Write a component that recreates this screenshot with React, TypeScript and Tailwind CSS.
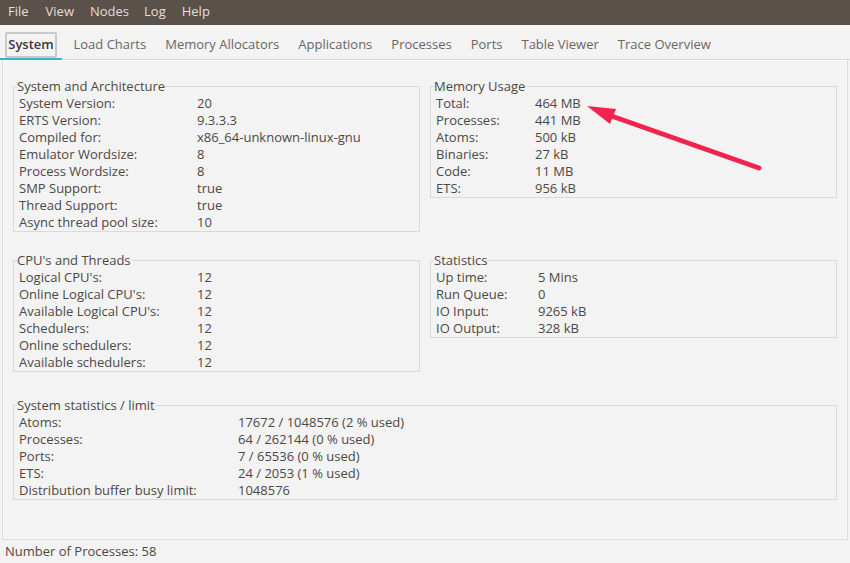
import React from "react";

type Row = [string, string];

const sysArch: Row[] = [
  ["System Version:", "20"],
  ["ERTS Version:", "9.3.3.3"],
  ["Compiled for:", "x86_64-unknown-linux-gnu"],
  ["Emulator Wordsize:", "8"],
  ["Process Wordsize:", "8"],
  ["SMP Support:", "true"],
  ["Thread Support:", "true"],
  ["Async thread pool size:", "10"],
];

const memory: Row[] = [
  ["Total:", "464 MB"],
  ["Processes:", "441 MB"],
  ["Atoms:", "500 kB"],
  ["Binaries:", "27 kB"],
  ["Code:", "11 MB"],
  ["ETS:", "956 kB"],
];

const cpus: Row[] = [
  ["Logical CPU's:", "12"],
  ["Online Logical CPU's:", "12"],
  ["Available Logical CPU's:", "12"],
  ["Schedulers:", "12"],
  ["Online schedulers:", "12"],
  ["Available schedulers:", "12"],
];

const stats: Row[] = [
  ["Up time:", "5 Mins"],
  ["Run Queue:", "0"],
  ["IO Input:", "9265 kB"],
  ["IO Output:", "328 kB"],
];

const limits: Row[] = [
  ["Atoms:", "17672 / 1048576 (2 % used)"],
  ["Processes:", "64 / 262144 (0 % used)"],
  ["Ports:", "7 / 65536 (0 % used)"],
  ["ETS:", "24 / 2053 (1 % used)"],
  ["Distribution buffer busy limit:", "1048576"],
];

const tabs = [
  "Load Charts",
  "Memory Allocators",
  "Applications",
  "Processes",
  "Ports",
  "Table Viewer",
  "Trace Overview",
];

function Group({ title, rows, labelW }: { title: string; rows: Row[]; labelW: string }) {
  return (
    <fieldset className="border border-[#dadada] pl-[5px] pr-2 min-w-0">
      <legend className="ml-[-2px] px-0 text-[13px] leading-[17px]">{title}</legend>
      <div className={`grid ${labelW}`}>
        {rows.map(([k, v]) => (
          <React.Fragment key={k}>
            <div className="text-[13px] leading-[17px] whitespace-nowrap">{k}</div>
            <div className="text-[13px] leading-[17px] whitespace-nowrap">{v}</div>
          </React.Fragment>
        ))}
      </div>
    </fieldset>
  );
}

export default function App() {
  return (
    <div
      className="relative w-[850px] h-[563px] overflow-hidden bg-[#f3f3f3] text-[#4d4845] flex flex-col"
      style={{ fontFamily: '"Open Sans", "Noto Sans", sans-serif' }}
    >
      {/* menu bar */}
      <div className="h-[25px] bg-[#5a514b] flex items-center pb-[1px] text-[13px] text-[#e3dfdb]">
        <span className="ml-[8px]">File</span>
        <span className="ml-[17px]">View</span>
        <span className="ml-[16px]">Nodes</span>
        <span className="ml-[15px]">Log</span>
        <span className="ml-[16px]">Help</span>
      </div>

      {/* tabs */}
      <div className="h-[35px] flex items-end border-b border-[#dadada]">
        <div className="w-[62px] h-full flex flex-col border-b-2 border-[#3ab3c8] mb-[-1px]">
          <div className="mt-[6px] ml-[5px] w-[52px] h-[27px] border-2 border-[#c9c9c9] rounded-[2px] flex items-center justify-center text-[13px] font-semibold text-[#3b3835]">
            System
          </div>
        </div>
        <div className="flex h-full items-center pt-[5px] pl-[2px] text-[13px] font-medium text-[#6b6662]">
          {tabs.map((t) => (
            <div key={t} className="px-[9.5px]">
              {t}
            </div>
          ))}
        </div>
      </div>

      {/* content panel */}
      <div className="mx-[2px] h-[480px] border border-t-0 border-[#dcdcdc] shadow-[inset_0_0_0_1px_#fafafa] px-[10px] pt-[18px]">
        <div className="grid grid-cols-2 gap-x-[10px] items-start">
          <Group title="System and Architecture" rows={sysArch} labelW="grid-cols-[178px_1fr]" />
          <Group title="Memory Usage" rows={memory} labelW="grid-cols-[99px_1fr]" />
        </div>
        <div className="grid grid-cols-2 gap-x-[10px] items-start mt-[20px]">
          <Group title="CPU's and Threads" rows={cpus} labelW="grid-cols-[178px_1fr]" />
          <Group title="Statistics" rows={stats} labelW="grid-cols-[102px_1fr]" />
        </div>
        <div className="mt-[25px]">
          <Group title="System statistics / limit" rows={limits} labelW="grid-cols-[219px_1fr]" />
        </div>
      </div>

      {/* status bar */}
      <div className="flex-1 flex items-center pl-[5px] text-[13px]">Number of Processes: 58</div>

      {/* annotation arrow */}
      <svg className="absolute inset-0 pointer-events-none" width="850" height="563">
        <line x1="759" y1="168" x2="603" y2="113" stroke="#f2244f" strokeWidth="5" strokeLinecap="round" />
        <polygon points="587,106 616,109 610,124" fill="#f2244f" />
      </svg>
    </div>
  );
}
